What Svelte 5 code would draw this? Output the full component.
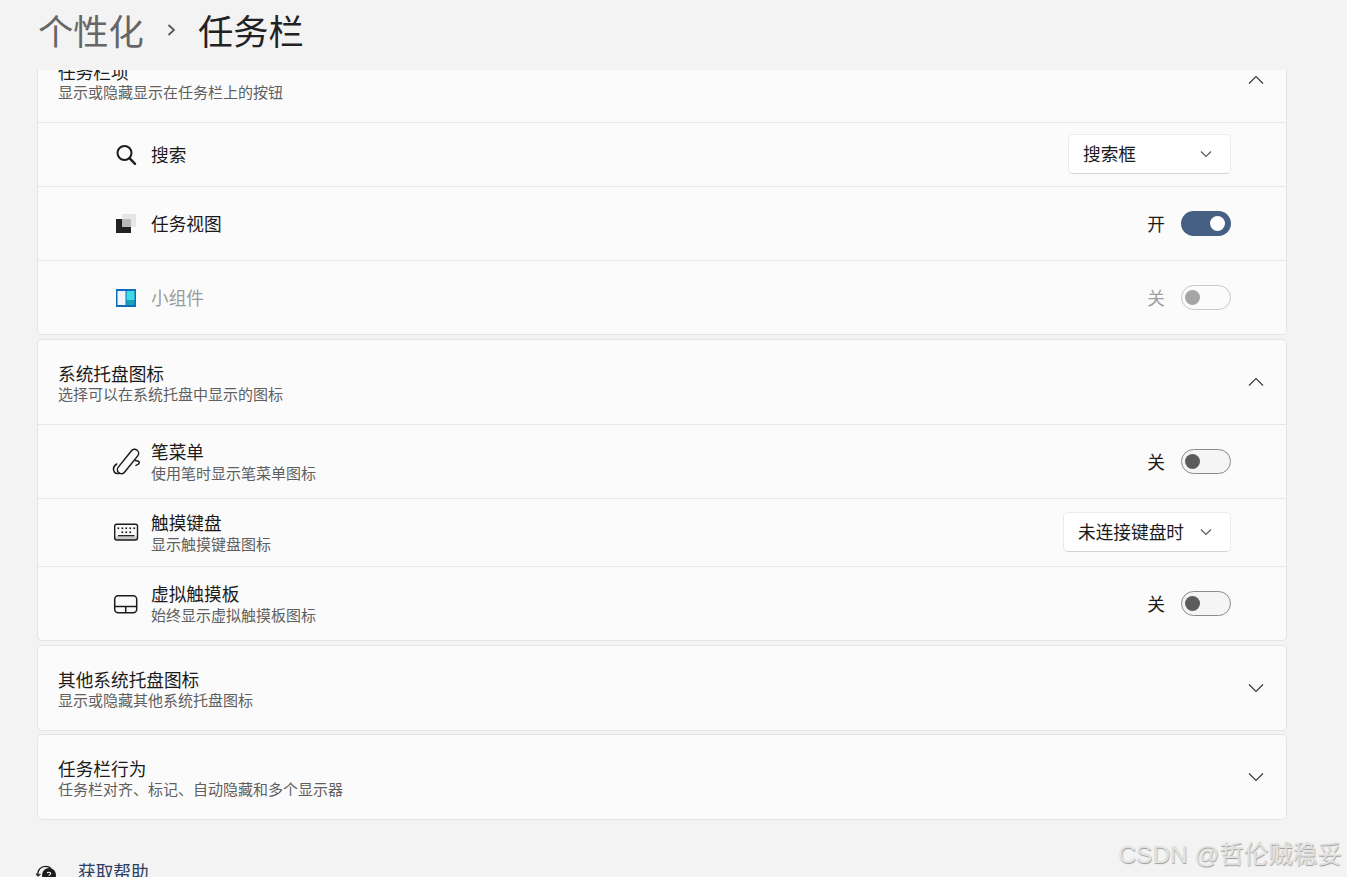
<script>
  const trayRows = [
    { icon: 'pen', title: '笔菜单', sub: '使用笔时显示笔菜单图标', toggle: '关', cls: 'r74' },
    { icon: 'kbd', title: '触摸键盘', sub: '显示触摸键盘图标', select: '未连接键盘时', cls: 'r68' },
    { icon: 'pad', title: '虚拟触摸板', sub: '始终显示虚拟触摸板图标', toggle: '关', cls: 'r74' }
  ];
  const topDots = [6.3, 10.3, 14.2, 18.2, 22.2];
  const midDots = [10.3, 14.2, 18.2];
</script>

{#snippet chevron(up)}
  <svg class="chev" width="16" height="10" viewBox="0 0 16 10" aria-hidden="true">
    <path d={up ? 'M1 8.500 8 1.500l7 7' : 'M1 1.500l7 7 7-7'} fill="none" stroke="#3c3c3c" stroke-width="1.200" />
  </svg>
{/snippet}

{#snippet small()}
  <svg class="small" width="12" height="8" viewBox="0 0 12 8" aria-hidden="true">
    <path d="M1 1.500l5 5 5-5" fill="none" stroke="#5a5a5a" stroke-width="1.200" />
  </svg>
{/snippet}

{#snippet toggle(state, label, dim)}
  <span class="tlabel" class:dim>{label}</span>
  <span class="sw {state}" class:dim><span class="knob"></span></span>
{/snippet}

{#snippet head(t, s, up)}
  <div class="head">
    <div class="texts">
      <div class="t">{t}</div>
      <div class="s">{s}</div>
    </div>
    <span class="chevwrap">{@render chevron(up)}</span>
  </div>
{/snippet}

<div class="page">
  <header class="crumb">
    <span class="parent">个性化</span>
    <svg class="sep" width="12" height="16" viewBox="0 0 12 16" aria-hidden="true">
      <path d="M2.500 3l5.500 5-5.500 5" fill="none" stroke="#555" stroke-width="1.700" />
    </svg>
    <span class="cur">任务栏</span>
  </header>

  <main class="scroll">
    <section class="card first">
      {@render head('任务栏项', '显示或隐藏显示在任务栏上的按钮', true)}
      <div class="row r64">
        <svg class="ic narrow" width="24" height="24" viewBox="0 0 24 24" aria-hidden="true">
          <circle cx="10.500" cy="10" r="7" fill="none" stroke="#1c1c1c" stroke-width="2" />
          <path d="M15.500 15.200 21 20.800" stroke="#1c1c1c" stroke-width="2.400" stroke-linecap="round" />
        </svg>
        <div class="t">搜索</div>
        <div class="sel w163">搜索框{@render small()}</div>
      </div>
      <div class="row r74">
        <svg class="ic narrow" width="24" height="24" viewBox="0 0 24 24" aria-hidden="true">
          <rect x="8" y="2" width="14" height="13" fill="#e6e6ea" />
          <rect x="2" y="7" width="15" height="14" fill="#222" />
          <rect x="8" y="7" width="9" height="8" fill="#b9b9b9" />
        </svg>
        <div class="t">任务视图</div>
        <div class="right">{@render toggle('on', '开', false)}</div>
      </div>
      <div class="row r74">
        <svg class="ic narrow" width="24" height="24" viewBox="0 0 24 24" aria-hidden="true">
          <rect x="2" y="3" width="20" height="18" fill="#0f6cbd" />
          <rect x="3.500" y="5" width="8" height="14" fill="#f2f5f8" />
          <rect x="12.500" y="5" width="8" height="9" fill="#3ddbe6" />
          <rect x="12.500" y="14" width="8" height="5" fill="#1aa3b8" />
        </svg>
        <div class="t dimtext">小组件</div>
        <div class="right">{@render toggle('off', '关', true)}</div>
      </div>
    </section>

    <section class="card">
      {@render head('系统托盘图标', '选择可以在系统托盘中显示的图标', true)}
      {#each trayRows as r}
        <div class="row {r.cls}">
          <svg class="ic" width="28" height="28" viewBox="0 0 28 28" aria-hidden="true">
            {#if r.icon === 'pen'}
              <g fill="none" stroke="#1c1c1c" stroke-width="1.500" stroke-linecap="round">
                <rect x="-4" y="-14.500" width="8" height="29" rx="4" transform="translate(16 13.500) rotate(39)" />
                <path d="M4.700 16C1.500 18 .8 21 2.300 24c1 1.500 3.500 1.800 5.500 1.300" />
                <path d="M23 12.500c2.800.2 4.400 1 4.300 2.200-.2 1.200-1.500 2.200-3.300 2.700" />
              </g>
            {:else if r.icon === 'kbd'}
              <path d="M3 17.500h22v3.500H3z" fill="#1c1c1c" opacity=".22" />
              <rect x="2.700" y="5.200" width="22.800" height="15.800" rx="2" fill="none" stroke="#1c1c1c" stroke-width="1.400" />
              {#each topDots as x}<rect x={x - 0.8} y="8.400" width="1.700" height="1.700" fill="#1c1c1c" />{/each}
              {#each midDots as x}<rect x={x - 0.8} y="12.400" width="1.700" height="1.700" fill="#1c1c1c" />{/each}
              <path d="M6 16.700h16.500" stroke="#1c1c1c" stroke-width="1.300" />
            {:else}
              <g fill="none" stroke="#1c1c1c" stroke-width="1.500">
                <rect x="2.700" y="5.700" width="22" height="17" rx="3.500" />
                <path d="M2.700 16.500h22M13.700 16.500v6" />
              </g>
            {/if}
          </svg>
          <div class="texts">
            <div class="t">{r.title}</div>
            <div class="s">{r.sub}</div>
          </div>
          {#if r.toggle}
            <div class="right">{@render toggle('off', r.toggle, false)}</div>
          {:else}
            <div class="sel w168">{r.select}{@render small()}</div>
          {/if}
        </div>
      {/each}
    </section>

    <section class="card tight">
      {@render head('其他系统托盘图标', '显示或隐藏其他系统托盘图标', false)}
    </section>
    <section class="card">
      {@render head('任务栏行为', '任务栏对齐、标记、自动隐藏和多个显示器', false)}
    </section>

    <div class="help">
      <svg width="24" height="24" viewBox="0 0 24 24" aria-hidden="true">
        <path d="M3 15.500C2 10 6 6.300 10.500 6.300c2.500 0 4.300.8 5.500 2.200" fill="none" stroke="#1c1c1c" stroke-width="1.300" />
        <path d="M1 13.500l2 2.500 2.500-2" fill="none" stroke="#1c1c1c" stroke-width="1.200" />
        <circle cx="14" cy="15" r="7" fill="#1c1c1c" />
        <path d="M12.200 13.200c.3-1.400 3.500-1.400 3.500.3 0 1-1.700 1.200-1.700 2.300" fill="none" stroke="#fff" stroke-width="1.100" />
      </svg>
      <span>获取帮助</span>
    </div>
  </main>

  <div class="mark">CSDN @哲伦贼稳妥</div>
</div>

<style>
  :global(body) { margin: 0; background: #f3f3f3; }
  .page {
    position: relative;
    height: 877px;
    overflow: hidden;
    background: #f3f3f3;
    font-family: "Noto Sans CJK SC", "Liberation Sans", sans-serif;
    color: #1a1a1a;
  }
  .crumb {
    height: 70px;
    box-sizing: border-box;
    padding: 0 0 11px 38px;
    display: flex;
    align-items: center;
    font-size: 35.300px;
    font-weight: 400;
  }
  .parent { color: #666; }
  .sep { margin: 0 20px 0 22px; }
  .cur { color: #222; }

  .scroll {
    height: 807px;
    overflow: hidden;
    padding: 0 60px 0 37px;
  }
  .card {
    background: #fbfbfb;
    border: 1px solid #e5e5e5;
    border-radius: 5px;
    margin-bottom: 4px;
  }
  .card.first { margin-top: -33px; }
  .card.tight { margin-bottom: 3px; }
  .head {
    height: 84px;
    box-sizing: border-box;
    padding: 0 22px 0 20px;
    display: flex;
    align-items: center;
    justify-content: space-between;
  }
  .head .texts { padding-top: 2px; }
  .head .s { margin-top: 1px; }
  .row .s { margin-top: 2px; }
  .chevwrap { display: flex; }
  .t { font-size: 17.670px; line-height: 21px; color: #1a1a1a; }
  .s { font-size: 15px; line-height: 18px; color: #5f5f5f; }
  .dimtext { color: #9c9c9c; }
  .row {
    display: flex;
    align-items: center;
    border-top: 1px solid #e8e8e8;
    box-sizing: border-box;
    padding: 0 55px 0 74px;
  }
  .r64 { height: 64px; }
  .r74 { height: 74px; }
  .r68 { height: 68px; }
  .ic { margin-right: 11px; flex: none; }
  .ic.narrow { margin-left: 2px; margin-right: 13px; }
  .right {
    margin-left: auto;
    display: flex;
    align-items: center;
  }
  .tlabel { font-size: 17.670px; margin-right: 16px; color: #1a1a1a; }
  .tlabel.dim { color: #a0a0a0; }
  .sw {
    width: 50px;
    height: 25px;
    box-sizing: border-box;
    border-radius: 13px;
    display: flex;
    align-items: center;
    padding: 0 6px;
  }
  .knob { width: 15px; height: 15px; border-radius: 50%; }
  .sw.on { background: #456082; justify-content: flex-end; }
  .sw.on .knob { background: #fff; }
  .sw.off { border: 1px solid #8a8a8a; background: #f5f5f5; padding: 0 3px; }
  .sw.off .knob { background: #5c5c5c; }
  .sw.off.dim { border-color: #c8c8c8; background: #fbfbfb; }
  .sw.off.dim .knob { background: #a5a5a5; }
  .sel {
    margin-left: auto;
    margin-bottom: 2px;
    height: 40px;
    box-sizing: border-box;
    background: #fff;
    border: 1px solid #ebebeb;
    border-bottom-color: #d4d4d4;
    border-radius: 5px;
    display: flex;
    align-items: center;
    justify-content: space-between;
    padding: 0 18px 0 14px;
    font-size: 17.670px;
  }
  .w163 { width: 163px; }
  .w168 { width: 168px; }
  .help {
    margin: 39px 0 0 -2px;
    display: flex;
    align-items: center;
    gap: 19px;
    font-size: 17.670px;
    color: #2b3d63;
  }
  .mark {
    position: absolute;
    right: 5px;
    bottom: 7px;
    font-size: 24.500px;
    color: #e2e2e2;
    font-family: "Liberation Sans", "Noto Sans CJK SC", sans-serif;
    text-shadow: 0.5px 0.5px 1px #999;
    white-space: nowrap;
  }
</style>
